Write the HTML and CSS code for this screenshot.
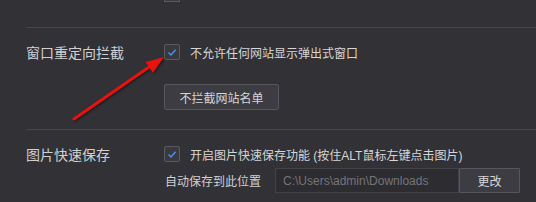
FILE: index.html
```html
<!DOCTYPE html>
<html lang="zh-cn">

<head>
    <meta charset="UTF-8">
    <meta name="viewport" content="width=device-width, initial-scale=1.0">
    <title>设置</title>
    <link rel="stylesheet" href="styles.css">
</head>

<body>
    <div class="settings">
        <div class="top">
            <span class="stub"></span>
        </div>

        <div class="section">
            <div class="row">
                <div class="label">窗口重定向拦截</div>
                <span class="check">
                    <svg width="15" height="15" viewBox="0 0 15 15"><path d="M3.8 7.6 L6.4 10.2 L11.4 4.6" /></svg>
                </span>
                <span class="text">不允许任何网站显示弹出式窗口</span>
            </div>
            <button class="btn wide">不拦截网站名单</button>
        </div>

        <div class="section">
            <div class="row">
                <div class="label">图片快速保存</div>
                <span class="check">
                    <svg width="15" height="15" viewBox="0 0 15 15"><path d="M3.8 7.6 L6.4 10.2 L11.4 4.6" /></svg>
                </span>
                <span class="text">开启图片快速保存功能 (按住ALT鼠标左键点击图片)</span>
            </div>
            <div class="path">
                <span class="sub">自动保存到此位置</span>
                <input class="field" type="text" placeholder="C:\Users\admin\Downloads">
                <button class="btn small">更改</button>
            </div>
        </div>
    </div>

    <svg class="arrow" width="536" height="202" viewBox="0 0 536 202">
        <line x1="74" y1="119" x2="152" y2="65" />
        <polygon points="164,57 153,73 145.5,62" />
    </svg>
</body>

</html>
```

FILE: styles.css
```css
* {
    margin: 0;
    padding: 0;
    box-sizing: border-box;
}

body {
    width: 536px;
    height: 202px;
    overflow: hidden;
    background: #323136;
    font-family: "Liberation Sans", "Noto Sans CJK SC", sans-serif;
    color: #d4d4d6;
}

.settings {
    padding-left: 26px;
}

.top {
    height: 27px;
}

.stub {
    display: block;
    width: 16px;
    height: 2px;
    margin-left: 138px;
    background: #3b3a40;
    border: 1px solid #5c5b61;
    border-top: 0;
}

.section {
    border-top: 1px solid #46454a;
    padding-top: 16px;
    padding-bottom: 19px;
}

.section:last-child {
    padding-bottom: 0;
}

.row {
    display: flex;
    align-items: center;
    height: 16px;
}

.label {
    width: 138px;
    font-size: 14px;
    color: #d0d0d2;
}

.check {
    width: 16px;
    height: 16px;
    border: 1px solid #5b5a60;
    border-radius: 2px;
    background: #3a393f;
    display: flex;
    align-items: center;
    justify-content: center;
}

.check svg path {
    fill: none;
    stroke: #4a8ef2;
    stroke-width: 1.6;
}

.text {
    margin-left: 10px;
    font-size: 12px;
    color: #d6d6d8;
}

.btn {
    display: block;
    height: 26px;
    background: #3d3c42;
    border: 1px solid #57565c;
    border-radius: 2px;
    color: #d6d6d8;
    font-family: "Liberation Sans", "Noto Sans CJK SC", sans-serif;
    font-size: 12px;
}

.wide {
    width: 115px;
    margin-top: 24px;
    margin-left: 138px;
}

.path {
    display: flex;
    align-items: center;
    margin-top: 6px;
    margin-left: 139px;
    height: 25px;
}

.sub {
    font-size: 12px;
    color: #d0d0d2;
}

.field {
    width: 184px;
    height: 25px;
    margin-left: 14px;
    padding-left: 7px;
    background: #2d2c31;
    border: 1px solid #434247;
    font-family: "Liberation Sans", "Noto Sans CJK SC", sans-serif;
    font-size: 12px;
    outline: none;
}

.field::placeholder {
    color: #75747a;
}

.small {
    width: 61px;
    height: 25px;
    border-radius: 1px;
}

.arrow {
    position: absolute;
    left: 0;
    top: 0;
    filter: drop-shadow(1px 1px 1px rgba(0, 0, 0, 0.5));
}

.arrow line {
    stroke: #e8130f;
    stroke-width: 3;
    stroke-linecap: round;
}

.arrow polygon {
    fill: #e8130f;
}
```
